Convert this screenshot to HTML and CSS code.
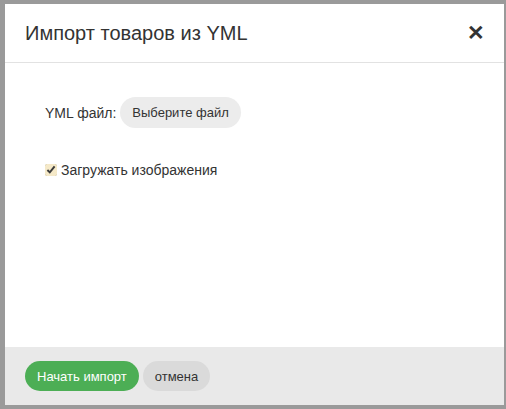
FILE: index.html
```html
<!DOCTYPE html>
<html lang="ru">
<head>
    <meta charset="UTF-8">
    <meta name="viewport" content="width=device-width, initial-scale=1.0">
    <title>Импорт товаров из YML</title>
    <link rel="stylesheet" href="styles.css">
</head>
<body>

    <div class="modal">
        <!-- Header -->
        <div class="modal-header">
            <h2>Импорт товаров из YML</h2>
            <span class="close">&#10005;</span>
        </div>

        <!-- Form -->
        <div class="modal-body">
            <div class="field">
                <label>YML файл:</label>
                <button class="btn btn-file">Выберите файл</button>
            </div>
            <label class="check">
                <input type="checkbox" checked>
                Загружать изображения
            </label>
        </div>

        <!-- Buttons -->
        <div class="modal-footer">
            <button class="btn btn-green">Начать импорт</button>
            <button class="btn btn-gray">отмена</button>
        </div>
    </div>

</body>
</html>
```

FILE: styles.css
```css
html, body {
    height: 100%;
}
body {
    font-family: "Liberation Sans", Arial, sans-serif;
    margin: 0;
    padding: 4px 2px 4px 5px;
    box-sizing: border-box;
    background-color: #9a9a9a;
    color: #333;
}
.modal {
    background: #fff;
    height: 100%;
    display: flex;
    flex-direction: column;
}
.modal-header {
    display: flex;
    align-items: center;
    justify-content: space-between;
    height: 58px;
    padding: 0 19px 0 20px;
    border-bottom: 1px solid #e2e2e2;
}
.modal-header h2 {
    margin: 0;
    font-size: 20px;
    font-weight: normal;
    color: #333;
}
.close {
    font-size: 21px;
    font-weight: bold;
    color: #333;
}
.modal-body {
    flex: 1;
    padding: 34px 40px 0;
    font-size: 14px;
}
.field {
    display: flex;
    align-items: center;
    gap: 4px;
}
.check {
    display: flex;
    align-items: center;
    gap: 4px;
    margin-top: 34px;
}
.check input {
    margin: 0;
    width: 12px;
    height: 12px;
    accent-color: #f5e9c8;
}
.modal-footer {
    display: flex;
    align-items: center;
    gap: 4px;
    height: 58px;
    padding: 0 20px;
    background: #e9e9e9;
}
.btn {
    font-family: inherit;
    font-size: 13px;
    border: none;
    border-radius: 16px;
    height: 31px;
    padding: 0 12px;
}
.btn-file {
    background: #ececec;
    color: #333;
}
.btn-green {
    background: #4cae55;
    color: #fff;
    height: 30px;
}
.btn-gray {
    background: #dadada;
    color: #333;
    height: 30px;
}
```
